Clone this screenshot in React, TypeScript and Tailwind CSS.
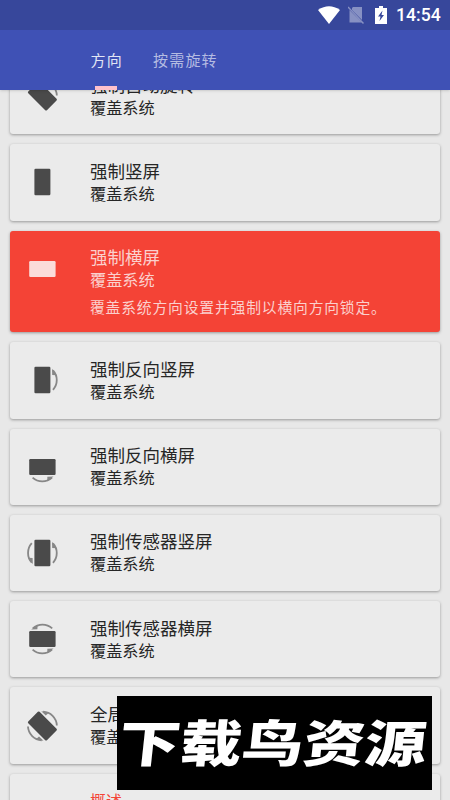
import React from 'react';
import clsx from 'clsx';

interface ModeCard {
  title: string;
  angle: number;
  arcs: number;
  description?: string;
}

const modes: ModeCard[] = [
  { title: '强制自动旋转', angle: -45, arcs: 1 },
  { title: '强制竖屏', angle: 0, arcs: 0 },
  { title: '强制横屏', angle: 90, arcs: 0, description: '覆盖系统方向设置并强制以横向方向锁定。' },
  { title: '强制反向竖屏', angle: 0, arcs: 1 },
  { title: '强制反向横屏', angle: 90, arcs: 1 },
  { title: '强制传感器竖屏', angle: 0, arcs: 2 },
  { title: '强制传感器横屏', angle: 90, arcs: 2 },
  { title: '全局', angle: -45, arcs: 2 },
];

// Phone body with up to two rotation arrows, turned as a whole
const OrientationIcon: React.FC<{ angle: number; arcs: number }> = ({ angle, arcs }) => (
  <svg className="w-9 h-9 shrink-0" viewBox="-18.4 -18 36 36">
    <g transform={`rotate(${angle})`}>
      <rect x="-8" y="-13.2" width="16" height="26.4" rx="1.2" fill="currentColor" />
      {[0, 180].slice(0, arcs).map((turn) => (
        <g key={turn} transform={`rotate(${turn})`} opacity="0.62">
          <path d="M10.6 -9.6A14.4 14.4 0 0 1 10.6 9.8" fill="none" stroke="currentColor" strokeWidth="1.8" />
          <path d="M9.6 -11.2L14.2 -4.8L9.8 -5Z" fill="currentColor" />
        </g>
      ))}
    </g>
  </svg>
);

const StatusBar: React.FC = () => (
  <div className="h-[30px] bg-[#37479b] flex items-center justify-end pr-[10px] text-white">
    <svg className="w-[22px] h-[18px]" viewBox="0 0 22 18">
      <path d="M0 4Q11 -3.5 22 4L11 18Z" fill="currentColor" />
    </svg>
    <svg className="w-4 h-[18px] ml-[8px] opacity-40" viewBox="0 0 16 18">
      <path d="M5 1H14V14L4 4V2ZM1.5 4L14 16.5H1.5Z" fill="currentColor" />
      <path d="M0 1L15.5 17.5" stroke="currentColor" strokeWidth="1.5" />
    </svg>
    <svg className="w-3 h-[18px] ml-[11px]" viewBox="0 0 12 18">
      <path d="M4 0H8V2H12V18H0V2H4Z" fill="currentColor" />
      <path d="M7.5 4.5L3 10.5H5.5L4.5 15L9 9H6.5Z" fill="#37479b" />
    </svg>
    <span className="ml-[9px] w-[44px] whitespace-nowrap text-[17.6px] leading-none font-medium font-[Roboto,sans-serif] pt-[2px]">14:54</span>
  </div>
);

const App: React.FC = () => {
  return (
    <div className="relative w-[450px] h-[800px] overflow-hidden bg-[#e8e8e8] text-[#262626] font-['Noto_Sans_CJK_SC',sans-serif]">
      {/* Header */}
      <header className="relative z-10 h-[90px] bg-[#3f51b5] shadow-sm">
        <StatusBar />
        <nav className="flex h-[60px] pl-[90.5px] gap-[29.5px] items-center text-[15px] tracking-[1.2px] text-[#b5bce2]">
          <div className="relative h-full flex items-center w-[33px] text-[#e2e5f4]">
            方向
            <span className="absolute left-[4.5px] bottom-0 w-[22px] h-1 bg-[#ffc1cb]"></span>
          </div>
          <div>按需旋转</div>
        </nav>
      </header>

      {/* Mode list */}
      <main className="flex flex-col gap-[9.9px] px-[10px] -mt-8">
        {modes.map((mode) => (
          <div
            key={mode.title}
            className={clsx(
              'flex shrink-0 rounded-[3px] pl-[14px] shadow-[0_1px_3px_rgba(0,0,0,0.35)]',
              mode.description ? 'h-[101.8px] bg-[#f44336] text-[#fbd0cd]' : 'h-[76.4px] bg-[#ebebeb]'
            )}
          >
            <div
              className={clsx(
                'flex w-[66px] h-[76.4px] items-center',
                mode.description ? 'text-[#fbdcda]' : 'text-[#4a4a4a]'
              )}
            >
              <OrientationIcon angle={mode.angle} arcs={mode.arcs} />
            </div>
            <div className="pt-[14.6px]">
              <h2 className="text-[17.5px] leading-[23px]">{mode.title}</h2>
              <p className="text-[16.2px] leading-[23.4px]">覆盖系统</p>
              {mode.description && (
                <p className="mt-[3.5px] text-[14.8px] leading-[24px] tracking-[0.82px]">{mode.description}</p>
              )}
            </div>
          </div>
        ))}
        <div className="h-[76px] shrink-0 rounded-[3px] bg-[#ebebeb] pl-20 pt-[15px] shadow-[0_1px_3px_rgba(0,0,0,0.35)]">
          <h2 className="text-[16px] leading-[23px] text-[#f44336]">概述</h2>
        </div>
      </main>

      {/* Watermark */}
      <div className="absolute z-20 left-[117px] top-[696px] w-[315px] h-[94px] pb-[6px] pr-[4px] bg-black flex items-center justify-center">
        <span className="whitespace-nowrap text-white text-[50px] leading-[80px] font-black [transform:scaleX(1.23)_skewX(-5deg)]">
          下载鸟资源
        </span>
      </div>
    </div>
  );
};

export default App;
